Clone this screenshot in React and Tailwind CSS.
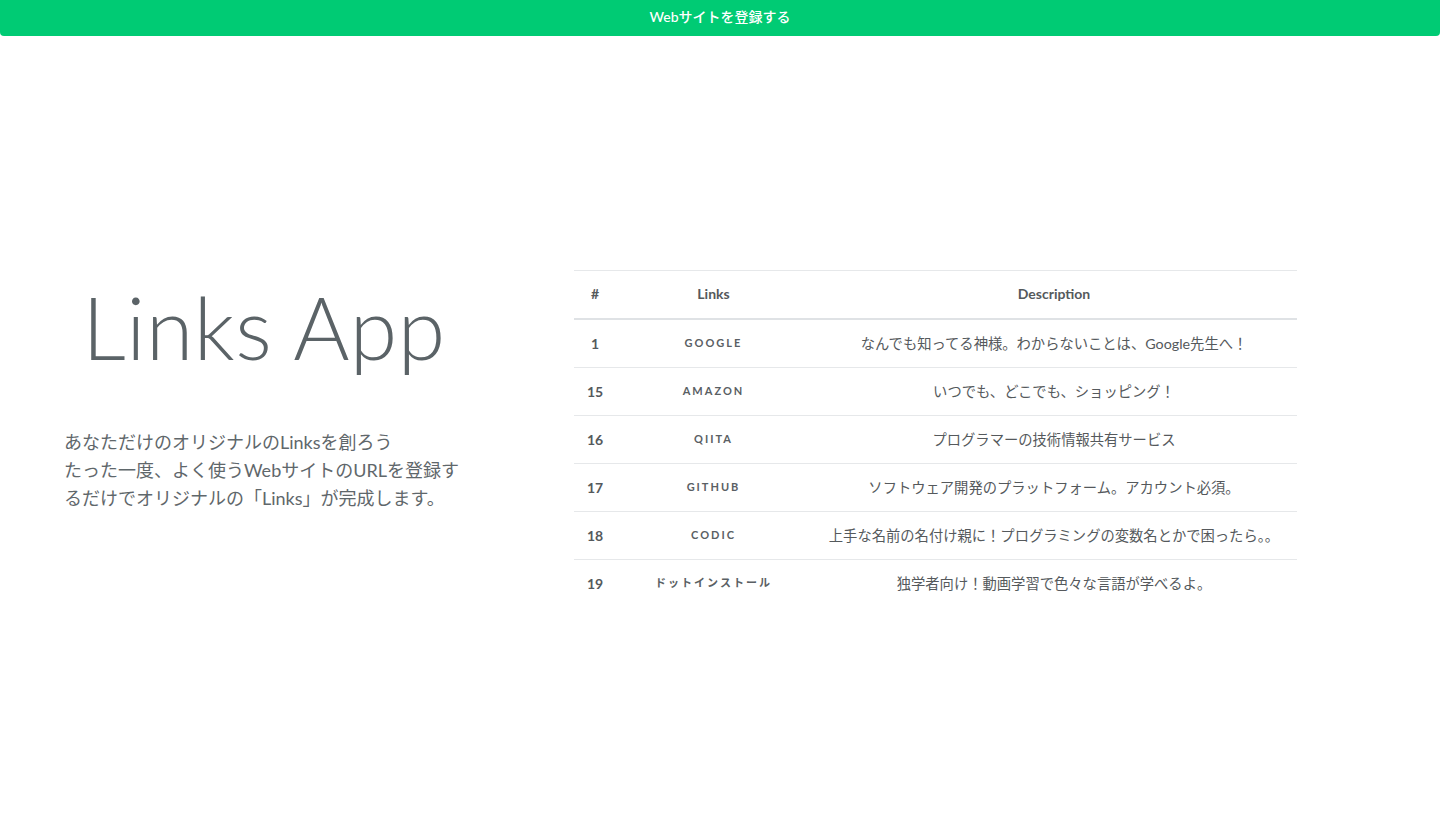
import React from "react";

const rows = [
  { id: 1, name: "GOOGLE", desc: "なんでも知ってる神様。わからないことは、Google先生へ！" },
  { id: 15, name: "AMAZON", desc: "いつでも、どこでも、ショッピング！" },
  { id: 16, name: "QIITA", desc: "プログラマーの技術情報共有サービス" },
  { id: 17, name: "GITHUB", desc: "ソフトウェア開発のプラットフォーム。アカウント必須。" },
  { id: 18, name: "CODIC", desc: "上手な名前の名付け親に！プログラミングの変数名とかで困ったら。。" },
  { id: 19, name: "ドットインストール", desc: "独学者向け！動画学習で色々な言語が学べるよ。" },
];

const font = { fontFamily: '"Lato", "Noto Sans CJK JP", sans-serif' };

export default function App() {
  return (
    <div className="w-[1440px] h-[820px] bg-white text-[#5d666b] overflow-hidden" style={font}>
      <button className="w-full h-[36px] bg-[#00cb74] rounded-b-[4px] text-white text-[14px] font-medium flex items-center justify-center pb-[4px]">
        Webサイトを登録する
      </button>
      <div className="flex items-start pt-[234px]">
        <div className="w-[528px] px-16 flex flex-col">
          <h1 className="text-center text-[86px] font-light leading-none text-[#5b6367] mt-[14px] tracking-[0.5px]">
            Links App
          </h1>
          <p className="text-[18px] leading-[28px] text-[#5f676b] mt-[58px] whitespace-nowrap">
            あなただけのオリジナルのLinksを創ろう
            <br />
            たった一度、よく使うWebサイトのURLを登録す
            <br />
            るだけでオリジナルの「Links」が完成します。
          </p>
        </div>
        <div className="ml-[46px] w-[723px] text-[#55595c]">
          <div className="grid grid-cols-[42px_195px_486px] border-t border-b-2 border-t-[#e6e8ea] border-b-[#dfe2e5] h-[50px] items-center text-[14px] font-bold text-center pb-[2px]">
            <div>#</div>
            <div>Links</div>
            <div>Description</div>
          </div>
          {rows.map((r, i) => (
            <div
              key={r.id}
              className={
                "grid grid-cols-[42px_195px_486px] items-center text-center " +
                (i === 0 ? "h-[47px]" : "h-[48px] border-t border-[#e6e8ea]")
              }
            >
              <div className="text-[14px] font-bold">{r.id}</div>
              <div className="text-[11px] font-bold tracking-[2px] text-[#5a6064]">{r.name}</div>
              <div className="text-[14.3px] whitespace-nowrap">{r.desc}</div>
            </div>
          ))}
        </div>
      </div>
    </div>
  );
}
